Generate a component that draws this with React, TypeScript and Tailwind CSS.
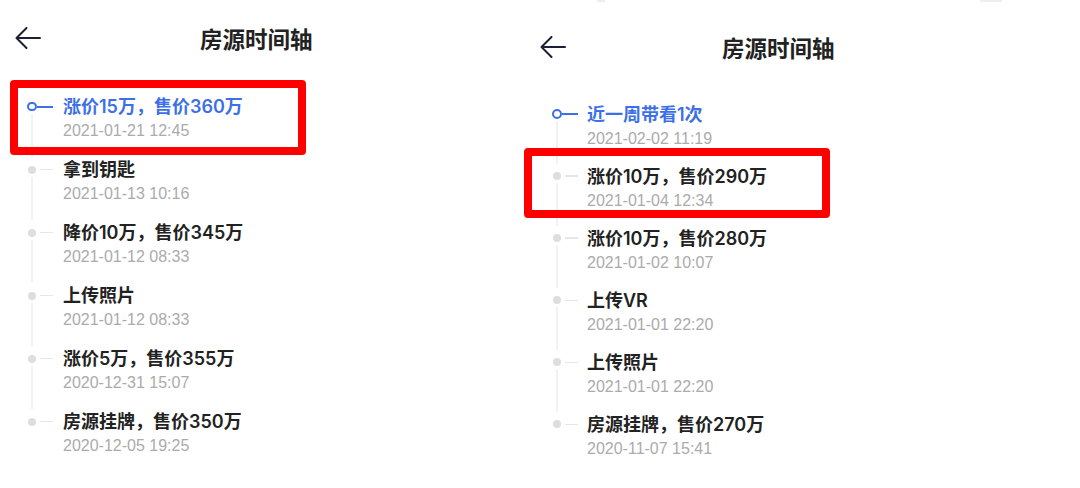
import React from "react";

type Item = { title: string; date: string; active?: boolean };

const leftItems: Item[] = [
  { title: "涨价15万，售价360万", date: "2021-01-21 12:45", active: true },
  { title: "拿到钥匙", date: "2021-01-13 10:16" },
  { title: "降价10万，售价345万", date: "2021-01-12 08:33" },
  { title: "上传照片", date: "2021-01-12 08:33" },
  { title: "涨价5万，售价355万", date: "2020-12-31 15:07" },
  { title: "房源挂牌，售价350万", date: "2020-12-05 19:25" },
];

const rightItems: Item[] = [
  { title: "近一周带看1次", date: "2021-02-02 11:19", active: true },
  { title: "涨价10万，售价290万", date: "2021-01-04 12:34" },
  { title: "涨价10万，售价280万", date: "2021-01-02 10:07" },
  { title: "上传VR", date: "2021-01-01 22:20" },
  { title: "上传照片", date: "2021-01-01 22:20" },
  { title: "房源挂牌，售价270万", date: "2020-11-07 15:41" },
];

const cjk = { fontFamily: '"Noto Sans CJK SC", "Noto Sans", sans-serif' };
const mixed = { fontFamily: 'Inter, "Noto Sans CJK SC", sans-serif' };
const latin = { fontFamily: '"Liberation Sans", Arial, sans-serif' };

function BackArrow() {
  return (
    <svg width="26" height="22" viewBox="0 0 26 22" fill="none">
      <path
        d="M25 11H1.5M11.5 1L1.5 11L11.5 21"
        stroke="#1c2035"
        strokeWidth="2"
        strokeLinecap="round"
        strokeLinejoin="round"
      />
    </svg>
  );
}

function Row({ item, last, right }: { item: Item; last: boolean; right?: boolean }) {
  return (
    <div className={right ? "flex h-[62.1px]" : "flex h-[63px]"}>
      <div className={right ? "flex w-[67px] shrink-0 flex-col pl-[32px]" : "flex w-[63px] shrink-0 flex-col pl-[27px]"}>
        <div className="h-[7.5px] shrink-0" />
        <div className="flex h-[10px] shrink-0 items-center">
          <div className="flex w-[10px] justify-center">
            {item.active ? (
              <div className="h-[9.5px] w-[9.5px] rounded-full border-[2px] border-[#3d70e6]" />
            ) : (
              <div className="h-[8px] w-[8px] rounded-full bg-[#dedede]" />
            )}
          </div>
          {item.active ? (
            <div className="h-[2px] w-[16px] bg-[#3d70e6]" />
          ) : (
            <div className="ml-[3px] h-[1.5px] w-[13px] bg-[#e6e6e6]" />
          )}
        </div>
        {!last && <div className="ml-[4.25px] mt-[2px] w-[1.5px] flex-1 bg-[#f2f2f2]" />}
      </div>
      <div className="flex flex-col">
        <div
          style={mixed}
          className={
            "h-[25px] whitespace-nowrap text-[18px] font-semibold leading-[25px] " +
            (item.active ? "text-[#3d70e6]" : "text-[#222222]")
          }
        >
          {item.title}
        </div>
        <div style={latin} className="h-[24px] whitespace-nowrap text-[16px] leading-[24px] text-[#ababab]">
          {item.date}
        </div>
      </div>
    </div>
  );
}

export default function App() {
  return (
    <div className="relative flex h-[488px] w-[1080px] overflow-hidden bg-white">
      {/* Left screenshot */}
      <div className="flex w-[520px] shrink-0 flex-col">
        <div className="flex h-[76px] items-center pl-[15px]">
          <BackArrow />
          <div style={cjk} className="ml-[159px] text-[22.5px] font-semibold leading-none text-[#222222]">
            房源时间轴
          </div>
        </div>
        <div className="flex flex-col pt-[18px]">
          {leftItems.map((it, i) => (
            <Row key={i} item={it} last={i === leftItems.length - 1} />
          ))}
        </div>
      </div>

      {/* Right screenshot */}
      <div className="flex w-[560px] shrink-0 flex-col">
        <div className="flex h-[94px] items-center pl-[20px]">
          <BackArrow />
          <div style={cjk} className="ml-[156px] text-[22.5px] font-semibold leading-none text-[#222222]">
            房源时间轴
          </div>
        </div>
        <div className="flex flex-col pt-[7.5px]">
          {rightItems.map((it, i) => (
            <Row key={i} item={it} last={i === rightItems.length - 1} right />
          ))}
        </div>
      </div>

      {/* faint status-bar remnants */}
      <div className="absolute left-[597px] top-0 h-[2px] w-[8px] bg-[#eeeeee]" />
      <div className="absolute left-[980px] top-0 h-[2px] w-[22px] bg-[#eeeeee]" />

      {/* red annotation boxes */}
      <div className="pointer-events-none absolute left-[10px] top-[80px] h-[75px] w-[296px] rounded-[4px] border-[8px] border-[#ff0000]" />
      <div className="pointer-events-none absolute left-[524px] top-[148px] h-[70px] w-[306px] rounded-[4px] border-[8px] border-[#ff0000]" />
    </div>
  );
}
